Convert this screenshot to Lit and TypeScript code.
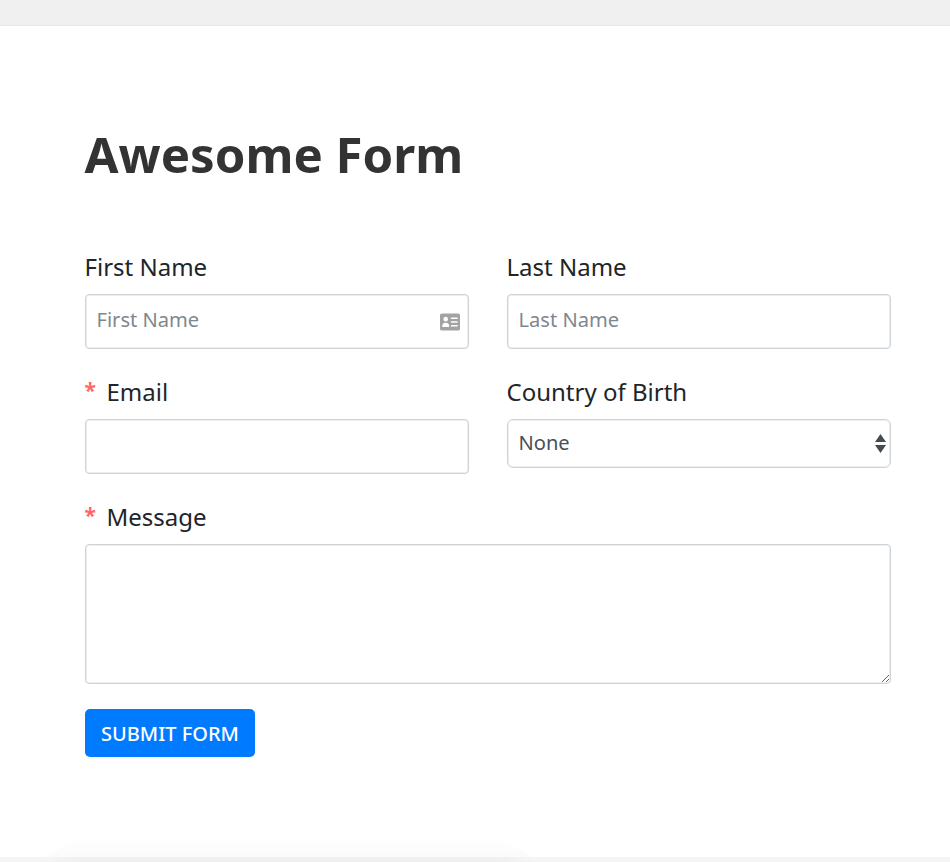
import { LitElement, html, css } from "lit";
import { customElement } from "lit/decorators.js";

@customElement("app-root")
export class AppRoot extends LitElement {
  static styles = css`
    :host {
      display: block;
      height: 862px;
      overflow: hidden;
      background: #f5f5f5;
      font-family: "Noto Sans", sans-serif;
      color: #212529;
    }
    .topbar {
      height: 25px;
      background: #f0f0f0;
      border-bottom: 1px solid #e6e6e6;
    }
    .page {
      position: relative;
      height: 831px;
      box-sizing: border-box;
      background: #fff;
      padding: 97px 59px 0 85px;
    }
    .smudge {
      position: absolute;
      left: 45px;
      bottom: 0;
      width: 488px;
      height: 22px;
      background: linear-gradient(#ffffff, #fbfbfb);
      clip-path: polygon(8% 0, 92% 0, 100% 100%, 0 100%);
    }
    .band {
      height: 5px;
      background: linear-gradient(
        to right,
        transparent 45px,
        #f0f0f0 80px,
        #f0f0f0 500px,
        transparent 533px
      );
    }
    h1 {
      margin: 0 0 0 -0.5px;
      font-size: 49.2px;
      line-height: 62px;
      font-weight: 700;
      color: #333;
    }
    form {
      display: grid;
      grid-template-columns: 384px 384px;
      column-gap: 38px;
      margin-top: 66px;
    }
    .field {
      display: flex;
      flex-direction: column;
      height: 125px;
    }
    .full {
      grid-column: 1 / 3;
      height: 208px;
    }
    label {
      display: flex;
      height: 30px;
      margin-bottom: 13px;
      margin-left: -0.5px;
      font-size: 24px;
      line-height: 31px;
      white-space: nowrap;
    }
    .req {
      width: 22px;
      color: #f66;
      font-size: 21px;
      font-weight: 700;
      line-height: 28px;
    }
    .box {
      position: relative;
      display: flex;
    }
    input,
    textarea,
    select {
      box-sizing: border-box;
      width: 100%;
      margin: 0;
      border: 1px solid #cfd4d9;
      box-shadow: inset 0 0 0 1px #eceef0;
      border-radius: 4px;
      background: #fff;
      font: inherit;
      font-size: 20.1px;
      outline: none;
    }
    input {
      height: 55px;
      padding: 0 10.5px 5px;
    }
    input::placeholder {
      color: #7f878e;
      opacity: 1;
    }
    textarea {
      display: block;
      height: 140px;
      resize: vertical;
    }
    select {
      height: 49px;
      padding: 0 10.5px 2px;
      appearance: none;
      border-radius: 6px;
      color: #495057;
    }
    .card-icon {
      position: absolute;
      right: 9px;
      top: 19px;
      width: 20px;
      height: 18px;
    }
    .arrows {
      position: absolute;
      right: 5px;
      top: 15px;
      width: 11px;
      height: 19px;
      pointer-events: none;
    }
    button {
      display: block;
      width: 170px;
      height: 48px;
      border: 0;
      border-radius: 5px;
      background: #007bff;
      color: #fff;
      font: inherit;
      font-size: 20px;
      font-weight: 500;
      padding: 0;
    }
  `;

  render() {
    return html`
      <div class="topbar"></div>
      <div class="page">
        <div class="smudge"></div>
        <h1>Awesome Form</h1>
        <form @submit=${(e: Event) => e.preventDefault()}>
          <div class="field">
            <label>First Name</label>
            <div class="box">
              <input placeholder="First Name" />
              <svg class="card-icon" viewBox="0 0 21 18">
                <path fill="#a3a3a3" fill-rule="evenodd" d="M2 0h17a2 2 0 0 1 2 2v14a2 2 0 0 1-2 2H2a2 2 0 0 1-2-2V2a2 2 0 0 1 2-2zM6 3.6a2.4 2.4 0 1 0 0 4.8 2.4 2.4 0 0 0 0-4.8zM2.4 14.2h7.2v-1.5c0-1.7-1.4-3-3.6-3s-3.6 1.300-3.600 3zM11.500 4.200v1.600h7v-1.600zM11.500 8.200v1.600h7v-1.600zM11.500 12.200v1.600h7v-1.600z"/>
              </svg>
            </div>
          </div>
          <div class="field">
            <label>Last Name</label>
            <div class="box"><input placeholder="Last Name" /></div>
          </div>
          <div class="field">
            <label><span class="req">*</span>Email</label>
            <div class="box"><input /></div>
          </div>
          <div class="field">
            <label>Country of Birth</label>
            <div class="box">
              <select><option>None</option></select>
              <svg class="arrows" viewBox="0 0 11 19">
                <path fill="#444c54" d="M5.500 0 11 8H0zM0 11h11l-5.500 8z"/>
              </svg>
            </div>
          </div>
          <div class="field full">
            <label><span class="req">*</span>Message</label>
            <div class="box"><textarea></textarea></div>
          </div>
        </form>
        <button>SUBMIT FORM</button>
      </div>
      <div class="band"></div>
    `;
  }
}
